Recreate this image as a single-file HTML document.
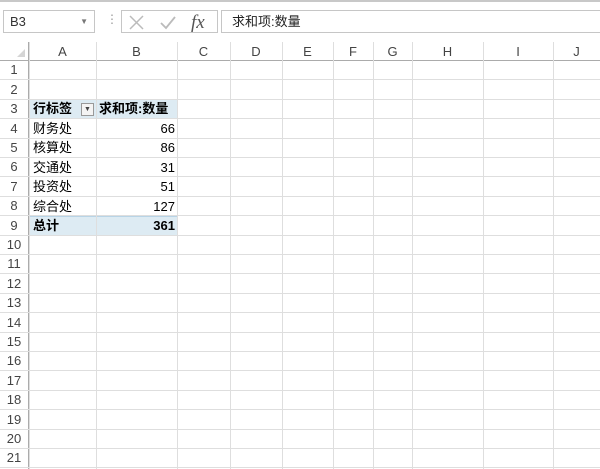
<!DOCTYPE html>
<html><head><meta charset="utf-8"><style>
*{margin:0;padding:0;box-sizing:border-box}
body{width:600px;height:469px;overflow:hidden;background:#fff;font-family:"Liberation Sans","Noto Sans CJK SC",sans-serif;position:relative}
.abs{position:absolute}
.vl{position:absolute;top:42px;width:1px;height:427px;background:#dedede}
.hl{position:absolute;left:0;width:600px;height:1px;background:#dedede}
.ch{position:absolute;top:44px;font-size:13px;color:#444;text-align:center}
.rh{position:absolute;left:0;width:28px;text-align:center;font-size:13px;color:#444}
.c{position:absolute;font-size:13px;color:#000;line-height:19px}
</style></head><body>
<div class="abs" style="left:0;top:0;width:600px;height:2px;background:#c8c8c8"></div>
<div class="abs" style="left:3px;top:10px;width:92px;height:23px;border:1px solid #c6c6c6;font-size:13px;line-height:21px;padding-left:6px;color:#333">B3<span style="position:absolute;right:6px;top:0;font-size:8px;color:#777">▼</span></div>
<div class="abs" style="left:106px;top:12px;font-size:12px;color:#999">⋮</div>
<div class="abs" style="left:121px;top:10px;width:97px;height:23px;border:1px solid #c6c6c6"></div>
<svg class="abs" style="left:128px;top:12px" width="85" height="20"><path d="M2 4L15 17M15 4L2 17" stroke="#bbb" stroke-width="1.5"/><path d="M33 11L38 16L47 5" stroke="#bbb" stroke-width="1.8" fill="none"/><text x="63" y="16" font-family="Liberation Serif" font-style="italic" font-size="19" fill="#555">fx</text></svg>
<div class="abs" style="left:221px;top:10px;width:379px;height:23px;border:1px solid #c6c6c6;border-right:none;font-size:13px;line-height:21px;padding-left:10px;color:#222">求和项:数量</div>
<div class="abs" style="left:0;top:60px;width:600px;height:1px;background:#ababab"></div>
<div class="abs" style="left:28px;top:42px;width:1px;height:427px;background:#ababab"></div>
<svg class="abs" style="left:16px;top:48px" width="10" height="10"><path d="M9 1L9 9L1 9Z" fill="#d5d5d5"/></svg>
<div class="abs" style="left:29px;top:100px;width:149px;height:19px;background:#ddebf3;border-bottom:1px solid #9ec3da"></div>
<div class="abs" style="left:29px;top:216px;width:149px;height:19px;background:#ddebf3;border-top:1px solid #b8d4e6"></div>
<div id="g"></div>
<script>
var cols=[29,96,177,230,282,333,373,412,483,553,600];var names="ABCDEFGHIJ";var h='';
for(var i=0;i<cols.length;i++){h+='<div class="vl" style="left:'+cols[i]+'px"></div>';}
for(i=0;i<10;i++){h+='<div class="ch" style="left:'+cols[i]+'px;width:'+(cols[i+1]-cols[i])+'px">'+names[i]+'</div>';}
for(var r=1;r<=21;r++){var t=60+r*19.4;h+='<div class="hl" style="top:'+Math.round(t)+'px"></div>';h+='<div class="rh" style="top:'+Math.round(t-17)+'px">'+r+'</div>';}
document.getElementById('g').innerHTML=h;
</script>
<div class="c" style="left:33px;top:99px;font-weight:bold">行标签</div>
<div class="abs" style="left:81px;top:103px;width:13px;height:13px;border:1px solid #999;background:#f4f4f4;font-size:7px;text-align:center;line-height:11px;color:#444">▼</div>
<div class="c" style="left:99px;top:99px;font-weight:bold">求和项:数量</div>
<div class="c" style="left:33px;top:119px">财务处</div><div class="c" style="left:96px;width:79px;text-align:right;top:119px">66</div>
<div class="c" style="left:33px;top:138px">核算处</div><div class="c" style="left:96px;width:79px;text-align:right;top:138px">86</div>
<div class="c" style="left:33px;top:158px">交通处</div><div class="c" style="left:96px;width:79px;text-align:right;top:158px">31</div>
<div class="c" style="left:33px;top:177px">投资处</div><div class="c" style="left:96px;width:79px;text-align:right;top:177px">51</div>
<div class="c" style="left:33px;top:197px">综合处</div><div class="c" style="left:96px;width:79px;text-align:right;top:197px">127</div>
<div class="c" style="left:33px;top:216px;font-weight:bold">总计</div><div class="c" style="left:96px;width:79px;text-align:right;top:216px;font-weight:bold">361</div>
</body></html>
